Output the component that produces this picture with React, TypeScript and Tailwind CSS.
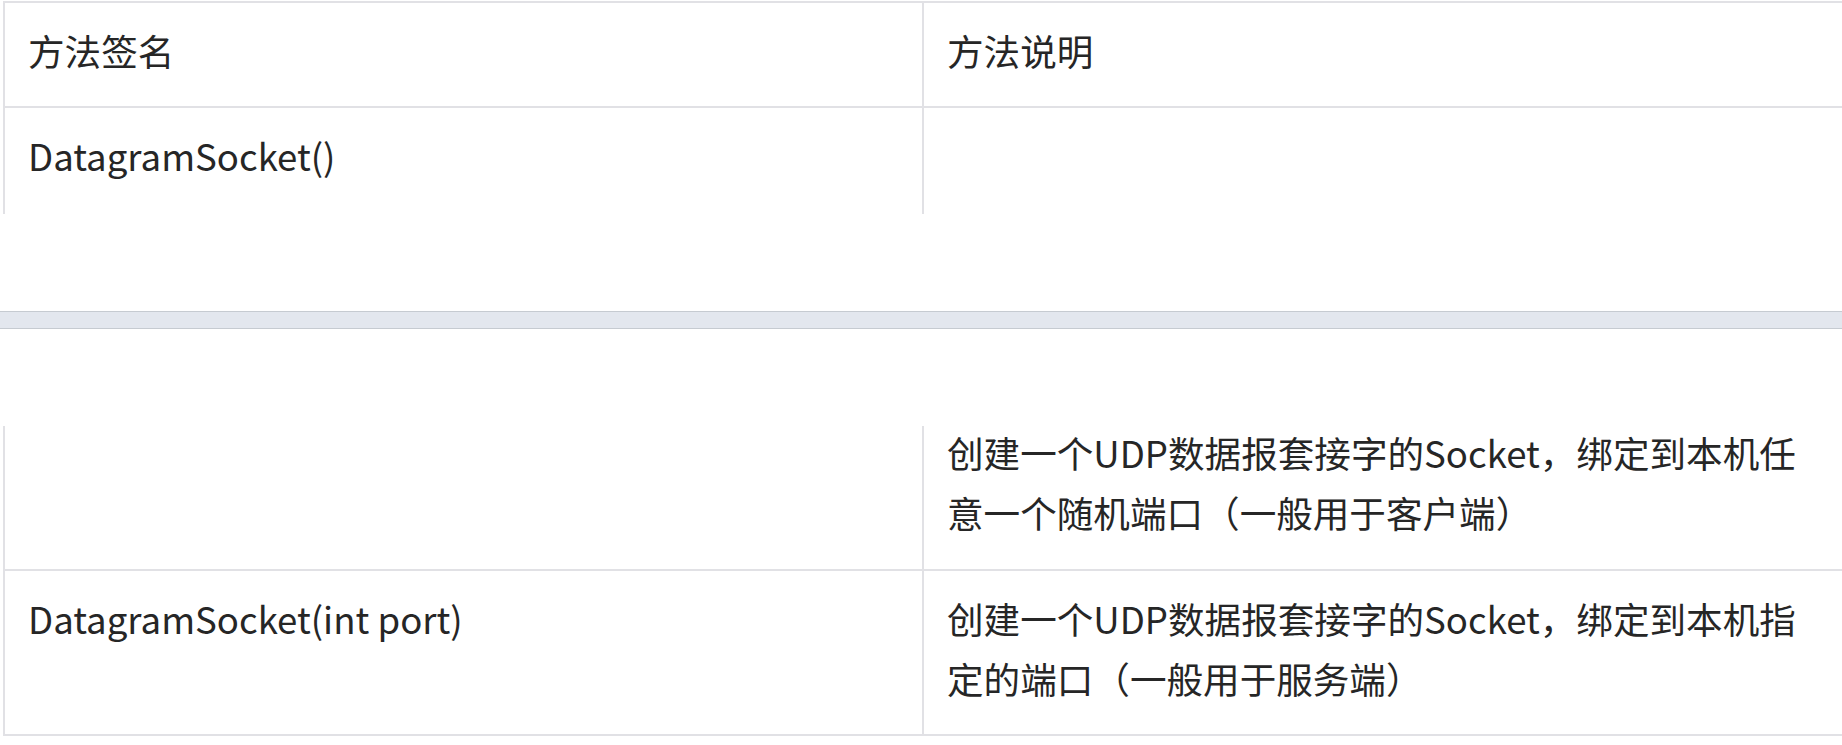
const HEAD = ['方法签名', '方法说明'];

const ROWS = [
  {
    sig: 'DatagramSocket()',
    desc: '创建一个UDP数据报套接字的Socket，绑定到本机任意一个随机端口（一般用于客户端）',
  },
  {
    sig: 'DatagramSocket(int port)',
    desc: '创建一个UDP数据报套接字的Socket，绑定到本机指定的端口（一般用于服务端）',
  },
];

export default function App() {
  return (
    <div className="h-[745px] w-full overflow-hidden bg-white font-['Noto_Sans_CJK_SC','Noto_Sans',sans-serif] text-[36.6px] leading-[60px] text-[#262626]">
      {/* ── 第一页 ── */}
      <div className="h-[311px] pt-px">
        <div className="ml-[3px] w-[1841px] border-l-2 border-t-2 border-[#e1e1e5]">
          <div className="grid grid-cols-[917px_1fr] border-b-2 border-[#e1e1e5]">
            {HEAD.map((h, i) => (
              <div key={h} className={`h-[103px] px-[23px] pt-[18px] ${i ? 'border-l-2 border-[#e1e1e5]' : ''}`}>
                {h}
              </div>
            ))}
          </div>
          <div className="grid h-[106px] grid-cols-[917px_1fr]">
            <div className="px-[23px] pt-[18px]">{ROWS[0].sig}</div>
            <div className="border-l-2 border-[#e1e1e5]" />
          </div>
        </div>
      </div>

      {/* 分页条 */}
      <div className="h-[18px] border-y border-[#c6cbd1] bg-[#e3e7ee]" />

      {/* ── 第二页 ── */}
      <div className="pt-[97px]">
        <div className="ml-[3px] w-[1841px] border-l-2 border-[#e1e1e5]">
          <div className="grid h-[145px] grid-cols-[917px_1fr] border-b-2 border-[#e1e1e5]">
            <div />
            <div className="border-l-2 border-[#e1e1e5] pl-[23px] pr-[24px]">
              <p className="-mt-[3px]">{ROWS[0].desc}</p>
            </div>
          </div>
          <div className="grid h-[165px] grid-cols-[917px_1fr] border-b-2 border-[#e1e1e5]">
            <div className="px-[23px] pt-[18px]">{ROWS[1].sig}</div>
            <div className="border-l-2 border-[#e1e1e5] pl-[23px] pr-[24px] pt-[18px]">{ROWS[1].desc}</div>
          </div>
        </div>
      </div>
    </div>
  );
}
